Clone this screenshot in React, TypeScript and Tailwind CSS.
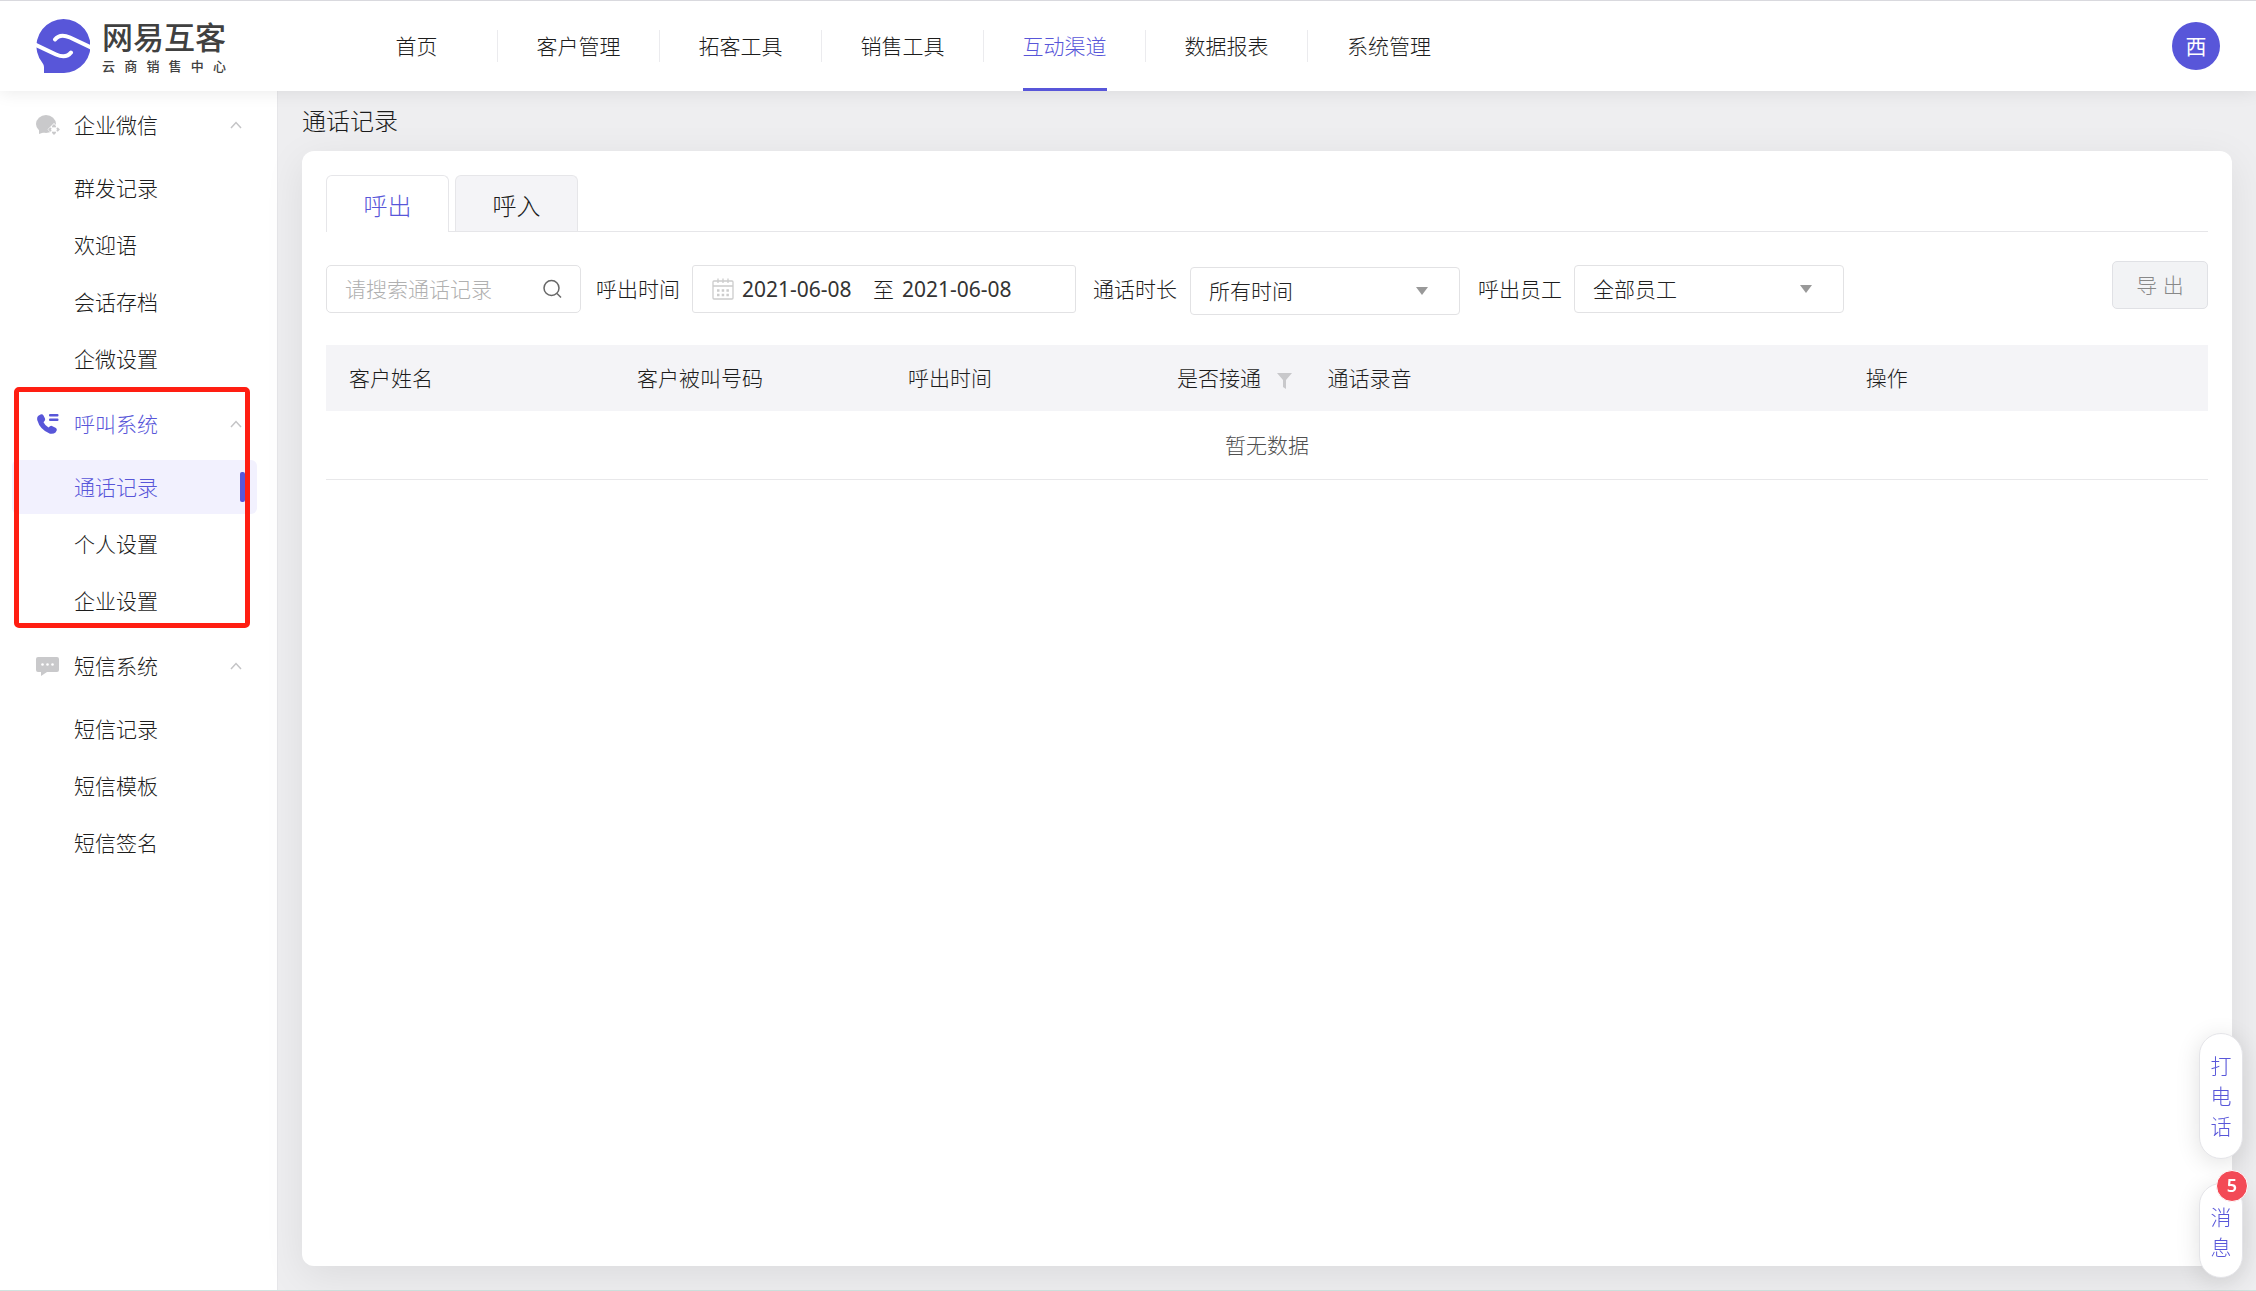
import { useState } from "react";
import type { ReactNode } from "react";

const navItems = ["首页", "客户管理", "拓客工具", "销售工具", "互动渠道", "数据报表", "系统管理"];

const groups = [
  { name: "企业微信", icon: WechatIcon, items: ["群发记录", "欢迎语", "会话存档", "企微设置"] },
  { name: "呼叫系统", icon: PhoneIcon, items: ["通话记录", "个人设置", "企业设置"] },
  { name: "短信系统", icon: SmsIcon, items: ["短信记录", "短信模板", "短信签名"] },
];

const columns = [
  { name: "客户姓名", width: "w-[15.3%]" },
  { name: "客户被叫号码", width: "w-[14.4%]" },
  { name: "呼出时间", width: "w-[14.3%]" },
  { name: "是否接通", width: "w-[8%]", filter: true },
  { name: "通话录音", width: "w-[28.6%]" },
  { name: "操作", width: "w-[19.4%]" },
];

function LogoMark() {
  return (
    <svg width="54" height="54" viewBox="0 0 54 54" aria-hidden="true">
      <path d="M8 54 V48 Q8 46 6.500 44 A27 27 0 1 1 27 54 Z" fill="#5856d9" />
      <path d="M-1 25.500 L20 35.500 Q30 40 35 33.500" fill="none" stroke="white" strokeWidth="4" strokeLinecap="round" />
      <path d="M55 28.500 L34 18.500 Q24 14 19 20.500" fill="none" stroke="white" strokeWidth="4" strokeLinecap="round" />
    </svg>
  );
}

function WechatIcon() {
  return (
    <svg width="24" height="22" viewBox="0 0 24 22" fill="#c9c9cb" aria-hidden="true">
      <ellipse cx="10" cy="10" rx="10" ry="9" />
      <path d="M3 14 V20 L9 18 Z" />
      <path d="M18 9 L24.500 15.500 L18 22 L11.500 15.500 Z" fill="white" />
      <g fill="none" stroke="#c9c9cb" strokeWidth="2" strokeLinecap="round">
        <path d="M17 12.500 L18 11.500 L19 12.500" />
        <path d="M21.500 14.500 L22.500 15.500 L21.500 16.500" />
        <path d="M17 18.500 L18 19.500 L19 18.500" />
        <path d="M14.500 14.500 L13.500 15.500 L14.500 16.500" />
      </g>
    </svg>
  );
}

function PhoneIcon() {
  return (
    <svg width="24" height="22" viewBox="0 0 24 22" fill="#5856d9" aria-hidden="true">
      <path d="M2 3 L4.500 1.500 Q6.500 .8 7.500 2.500 L9 5.500 Q9.500 7 8.500 8 L7.500 9.300 Q9 12.500 12.500 14.500 L14 13.300 Q15 12.500 16.500 13.200 L20 15 Q21.200 16 20.700 17.500 L19.500 19.500 Q17.500 21.300 14 20.700 Q4 17 1.200 7 Q.7 4.500 2 3 Z" />
      <rect x="13" y="1" width="9.500" height="2.500" rx="1" />
      <rect x="13" y="5.500" width="9.500" height="2.500" rx="1" />
    </svg>
  );
}

function SmsIcon() {
  return (
    <svg width="24" height="22" viewBox="0 0 24 22" aria-hidden="true">
      <path d="M2 2 H21 Q23 2 23 4 V15 Q23 17 21 17 H11 L5 21 V17 H2 Q0 17 0 15 V4 Q0 2 2 2 Z" fill="#c9c9cb" />
      <g fill="white">
        <circle cx="6.500" cy="9.500" r="1.300" />
        <circle cx="11.500" cy="9.500" r="1.300" />
        <circle cx="16.500" cy="9.500" r="1.300" />
      </g>
    </svg>
  );
}

function Chevron() {
  return (
    <svg width="12" height="8" viewBox="0 0 12 8" fill="none" stroke="#c4c4c6" strokeWidth="1.500" aria-hidden="true">
      <path d="M1 7 L6 1.500 L11 7" />
    </svg>
  );
}

function SearchIcon() {
  return (
    <svg width="20" height="20" viewBox="0 0 20 20" fill="none" stroke="#666" strokeWidth="1.500" aria-hidden="true">
      <circle cx="9.500" cy="9" r="7.500" />
      <path d="M15 14.500 L19 18.500" />
    </svg>
  );
}

function CalendarIcon() {
  return (
    <svg width="22" height="22" viewBox="0 0 22 22" fill="none" stroke="#ccc" strokeWidth="1.300" aria-hidden="true">
      <rect x="1" y="3" width="20" height="18" rx="1" />
      <path d="M1 8 H21 M6 .5 V5 M11 .5 V5 M16 .5 V5" />
      <path d="M5 12.500 H17 M5 17 H17" strokeWidth="2.500" strokeDasharray="2.500 2.200" />
    </svg>
  );
}

function FilterIcon() {
  return (
    <svg className="mt-[5px]" width="15" height="16" viewBox="0 0 15 16" fill="#c8c8cb" aria-hidden="true">
      <path d="M0 0 H15 L9 7 V16 L6 14 V7 Z" />
    </svg>
  );
}

function SelectBox({ id, value, className = "" }: { id: string; value: string; className?: string }) {
  return (
    <div className={`relative w-[270px] ${className}`}>
      <select id={id} className="block h-12 w-full appearance-none rounded-[4px] border border-[#e2e2e4] bg-white pl-[18px] pr-12 text-[#222] outline-none">
        <option>{value}</option>
      </select>
      <svg className="pointer-events-none absolute right-8 top-5" width="12" height="8" viewBox="0 0 12 8" aria-hidden="true">
        <path d="M0 0 H12 L6 8 Z" fill="#999" />
      </svg>
    </div>
  );
}

function FloatButton({ children, className = "" }: { children: ReactNode; className?: string }) {
  return (
    <button className={`relative flex w-11 flex-col items-center rounded-full border border-[#e4e4e8] bg-white leading-[30px] text-[#5856d9] shadow-[0_4px_24px_rgba(0,0,0,0.12)] ${className}`}>
      {children}
    </button>
  );
}

export default function App() {
  const [tab, setTab] = useState("呼出");
  const [keyword, setKeyword] = useState("");

  return (
    <div className="flex min-h-screen flex-col border-b border-[#cfe3df] bg-[#eeeef0] text-[21px] font-light leading-[30px] text-[#1c1c1c] [font-family:'Noto_Sans','Noto_Sans_CJK_SC',sans-serif]">
      <header className="relative z-10 flex h-[91px] items-center border-t border-[#d9d9de] bg-white shadow-[0_2px_16px_rgba(0,0,0,0.08)]">
        <a href="#" className="flex w-[336px] shrink-0 items-center gap-3 pl-9">
          <LogoMark />
          <span className="flex flex-col gap-[3px] text-[#404040]">
            <span className="text-[31px] font-medium leading-9">网易互客</span>
            <span className="flex w-[124px] justify-between text-[13px] font-medium leading-4">
              {"云商销售中心".split("").map((c) => <span key={c}>{c}</span>)}
            </span>
          </span>
        </a>
        <nav className="flex h-full flex-1">
          {navItems.map((name, i) => {
            const active = name === "互动渠道";
            return (
              <div key={name} className="flex h-full w-[162px] items-center">
                <div className="flex h-full flex-1 justify-center">
                  <a href="#" className={active ? "flex items-center border-b-3 border-[#5856d9] pt-[3px] text-[#5856d9]" : "flex items-center"}>{name}</a>
                </div>
                {i < navItems.length - 1 && <span className="h-8 w-px bg-[#ebebee]" />}
              </div>
            );
          })}
        </nav>
        <button className="mr-9 size-12 rounded-full bg-[#5856d9] font-normal text-white">西</button>
      </header>

      <div className="flex flex-1">
        <aside className="flex w-[278px] shrink-0 flex-col gap-[11px] border-r border-[#e6e6e9] bg-white pt-[7px]">
          {groups.map(({ name, icon: Icon, items }) => {
            const open = name === "呼叫系统";
            return (
              <section key={name} className="relative">
                <button className={`mb-[9px] flex h-[54px] w-full items-center pl-9 pr-[35px] ${open ? "text-[#5856d9]" : ""}`}>
                  <Icon />
                  <span className="ml-[14px] flex-1 text-left">{name}</span>
                  <Chevron />
                </button>
                <ul className="flex flex-col gap-[3px] pl-3 pr-5">
                  {items.map((item) => {
                    const active = item === "通话记录";
                    return (
                      <li key={item}>
                        <a href="#" className={`flex h-[54px] items-center justify-between rounded-md pl-[62px] pr-3 ${active ? "bg-[#f2f1fe] text-[#5856d9]" : ""}`}>
                          {item}
                          {active && <span className="h-[30px] w-[5px] rounded-[2px] bg-[#5856d9]" />}
                        </a>
                      </li>
                    );
                  })}
                </ul>
                {open && <div className="pointer-events-none absolute -top-[10px] bottom-0 left-[14px] w-[236px] rounded-[5px] border-5 border-[#ff1e12]" />}
              </section>
            );
          })}
        </aside>

        <main className="flex flex-1 flex-col px-6 pb-6">
          <h1 className="flex h-[60px] items-center text-2xl">通话记录</h1>
          <div className="flex-1 rounded-xl bg-white p-6 shadow-[0_10px_40px_rgba(0,0,0,0.08)]">
            <div className="flex gap-[6px] border-b border-[#e6e6e9]" role="tablist">
              {["呼出", "呼入"].map((name) => (
                <button
                  key={name}
                  role="tab"
                  aria-selected={tab === name}
                  onClick={() => setTab(name)}
                  className={`w-[123px] rounded-t-md border border-b-0 border-[#e6e6e9] pt-1 text-2xl ${tab === name ? "-mb-px h-[57px] bg-white text-[#5856d9]" : "h-14 bg-[#f4f4f7]"}`}
                >
                  {name}
                </button>
              ))}
            </div>

            <div className="mt-[29px] flex items-start">
              <div className="mt-[2px] flex items-center">
                <label className="flex h-12 w-[255px] items-center rounded-[5px] border border-[#e2e2e4] px-[18px]">
                  <input
                    aria-label="搜索通话记录"
                    className="min-w-0 flex-1 outline-none placeholder:text-[#b0b0b0]"
                    placeholder="请搜索通话记录"
                    value={keyword}
                    onChange={(e) => setKeyword(e.target.value)}
                  />
                  <SearchIcon />
                </label>
                <label htmlFor="start" className="ml-[15px]">呼出时间</label>
                <div className="ml-3 flex h-12 w-[384px] items-center rounded-[3px] border border-[#e2e2e4] pl-[19px]">
                  <CalendarIcon />
                  <input id="start" className="ml-2 w-[118px] font-normal text-[#333] outline-none" defaultValue="2021-06-08" />
                  <span className="ml-[13px]">至</span>
                  <input aria-label="结束日期" className="ml-2 w-[118px] font-normal text-[#333] outline-none" defaultValue="2021-06-08" />
                </div>
                <label htmlFor="duration" className="ml-[17px]">通话时长</label>
                <SelectBox id="duration" value="所有时间" className="ml-[13px] mt-1" />
                <label htmlFor="staff" className="ml-[18px]">呼出员工</label>
                <SelectBox id="staff" value="全部员工" className="ml-3" />
              </div>
              <button disabled className="ml-auto h-12 w-24 rounded-[5px] border border-[#e0e1e5] bg-[#f2f3f5] text-[#888]">导 出</button>
            </div>

            <table className="mt-[30px] w-full table-fixed text-left">
              <thead className="bg-[#f4f4f7]">
                <tr>
                  {columns.map((col) => (
                    <th key={col.name} className={`h-[66px] whitespace-nowrap pl-[23px] font-light ${col.width}`}>
                      <span className="flex items-center gap-4">
                        {col.name}
                        {col.filter && <FilterIcon />}
                      </span>
                    </th>
                  ))}
                </tr>
              </thead>
              <tbody>
                <tr className="border-b border-[#e8e8ea]">
                  <td colSpan={6} className="h-[68px] text-center text-[#505050]">暂无数据</td>
                </tr>
              </tbody>
            </table>
          </div>
        </main>
      </div>

      <div className="fixed bottom-[13px] right-[13px] z-20 flex flex-col gap-6">
        <FloatButton className="py-[17px]">
          <span>打</span>
          <span>电</span>
          <span>话</span>
        </FloatButton>
        <FloatButton className="pb-[15px] pt-[18px]">
          <span>消</span>
          <span>息</span>
          <span className="absolute -right-[6px] -top-[14px] size-8 rounded-full border border-white bg-[#f34a56] text-lg font-semibold text-white">5</span>
        </FloatButton>
      </div>
    </div>
  );
}
